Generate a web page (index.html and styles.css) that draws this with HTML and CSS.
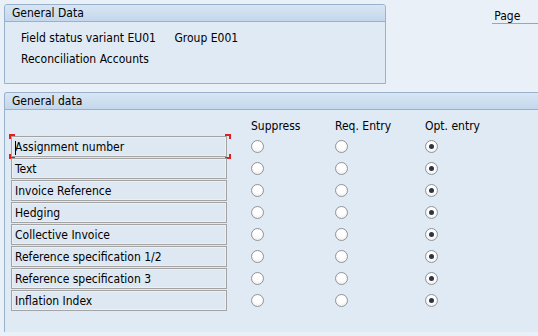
FILE: index.html
```html
<!DOCTYPE html>
<html lang="en">
<head>
  <meta charset="UTF-8">
  <title>Field Status</title>
  <link rel="stylesheet" href="styles.css">
</head>
<body>

  <div class="top-row">
    <div class="group-box summary">
      <div class="group-title">General Data</div>
      <div class="summary-body">
        <div class="summary-line">
          <span class="variant">Field status variant EU01</span>
          <span>Group E001</span>
        </div>
        <div class="summary-line">Reconciliation Accounts</div>
      </div>
    </div>
    <div class="page-label">Page</div>
  </div>

  <div class="group-box fields">
    <div class="group-title">General data</div>
    <div class="field-grid">
      <div></div>
      <div class="col-head">Suppress</div>
      <div class="col-head">Req. Entry</div>
      <div class="col-head">Opt. entry</div>

      <div class="field focused"><span class="caret"></span>Assignment number</div>
      <div class="cell"><span class="radio"></span></div>
      <div class="cell"><span class="radio"></span></div>
      <div class="cell"><span class="radio on"></span></div>

      <div class="field">Text</div>
      <div class="cell"><span class="radio"></span></div>
      <div class="cell"><span class="radio"></span></div>
      <div class="cell"><span class="radio on"></span></div>

      <div class="field">Invoice Reference</div>
      <div class="cell"><span class="radio"></span></div>
      <div class="cell"><span class="radio"></span></div>
      <div class="cell"><span class="radio on"></span></div>

      <div class="field">Hedging</div>
      <div class="cell"><span class="radio"></span></div>
      <div class="cell"><span class="radio"></span></div>
      <div class="cell"><span class="radio on"></span></div>

      <div class="field">Collective Invoice</div>
      <div class="cell"><span class="radio"></span></div>
      <div class="cell"><span class="radio"></span></div>
      <div class="cell"><span class="radio on"></span></div>

      <div class="field">Reference specification 1/2</div>
      <div class="cell"><span class="radio"></span></div>
      <div class="cell"><span class="radio"></span></div>
      <div class="cell"><span class="radio on"></span></div>

      <div class="field">Reference specification 3</div>
      <div class="cell"><span class="radio"></span></div>
      <div class="cell"><span class="radio"></span></div>
      <div class="cell"><span class="radio on"></span></div>

      <div class="field">Inflation Index</div>
      <div class="cell"><span class="radio"></span></div>
      <div class="cell"><span class="radio"></span></div>
      <div class="cell"><span class="radio on"></span></div>
    </div>
  </div>

</body>
</html>
```

FILE: styles.css
```css
html, body {
  height: 100%;
}

body {
  margin: 0;
  padding: 4px 0 0 4px;
  box-sizing: border-box;
  overflow: hidden;
  background-color: #e9f0f8;
  font-family: 'DejaVu Sans Condensed', 'DejaVu Sans', sans-serif;
  font-size: 12px;
  color: #000;
}

.top-row {
  display: flex;
  align-items: flex-start;
}

.group-box {
  background-color: #dfeaf5;
  border: 1px solid #98b1cc;
  border-radius: 3px 3px 0 0;
  box-sizing: border-box;
}

.group-title {
  height: 16px;
  line-height: 16px;
  padding-left: 7px;
  background: linear-gradient(#d8e6f4, #c3d7ec);
  border-bottom: 1px solid #98b1cc;
  border-radius: 2px 2px 0 0;
}

.summary {
  width: 384px;
  height: 80px;
}

.summary-body {
  padding: 8px 0 0 16px;
}

.summary-line {
  height: 21px;
  line-height: 16px;
}

.variant {
  display: inline-block;
  width: 154px;
  margin-right: -4px;
}

.page-label {
  margin-left: 106px;
  margin-top: 5px;
  width: 44px;
  padding-left: 2px;
  line-height: 14px;
  border-bottom: 1px solid #a4a4a4;
}

.fields {
  margin-top: 8px;
  margin-right: -20px;
  height: 240px;
  border-right: none;
  border-bottom: none;
}

.field-grid {
  display: grid;
  grid-template-columns: 240px 84px 90px 90px;
  grid-auto-rows: 22px;
  grid-template-rows: 26px;
  padding-left: 6px;
}

.col-head {
  padding-top: 9px;
  line-height: 14px;
}

.field {
  position: relative;
  width: 216px;
  height: 21px;
  box-sizing: border-box;
  padding-left: 3px;
  line-height: 20px;
  border: 1px solid #a3a3a3;
  box-shadow: inset 0 0 0 1px #eaf0f6;
  background-color: #dde8f3;
  white-space: nowrap;
}

.focused::before,
.focused::after {
  content: '';
  position: absolute;
  top: -3px;
  bottom: -3px;
  width: 218px;
  left: -3px;
  pointer-events: none;
}

.focused::before {
  border-left: 2px solid #e0201c;
  border-right: 2px solid #e0201c;
  clip-path: polygon(0 0, 100% 0, 100% 5px, 0 5px, 0 calc(100% - 5px), 100% calc(100% - 5px), 100% 100%, 0 100%);
}

.focused::after {
  border-top: 2px solid #e0201c;
  border-bottom: 2px solid #e0201c;
  box-sizing: border-box;
  width: 222px;
  clip-path: polygon(0 0, 6px 0, 6px 100%, 0 100%, 0 0, 100% 0, 100% 100%, calc(100% - 6px) 100%, calc(100% - 6px) 0);
}

.caret {
  display: inline-block;
  width: 1px;
  height: 14px;
  background-color: #000;
  vertical-align: middle;
  margin-right: -1px;
}

.cell {
  height: 21px;
  display: flex;
  align-items: center;
}

.radio {
  display: inline-block;
  width: 13px;
  height: 13px;
  box-sizing: border-box;
  border: 1px solid #959595;
  border-radius: 50%;
  background: radial-gradient(circle at 50% 40%, #ffffff 40%, #e4e4e4 100%);
  position: relative;
}

.radio.on::after {
  content: '';
  position: absolute;
  left: 3px;
  top: 3px;
  width: 5px;
  height: 5px;
  border-radius: 50%;
  background-color: #2e3444;
}
```
